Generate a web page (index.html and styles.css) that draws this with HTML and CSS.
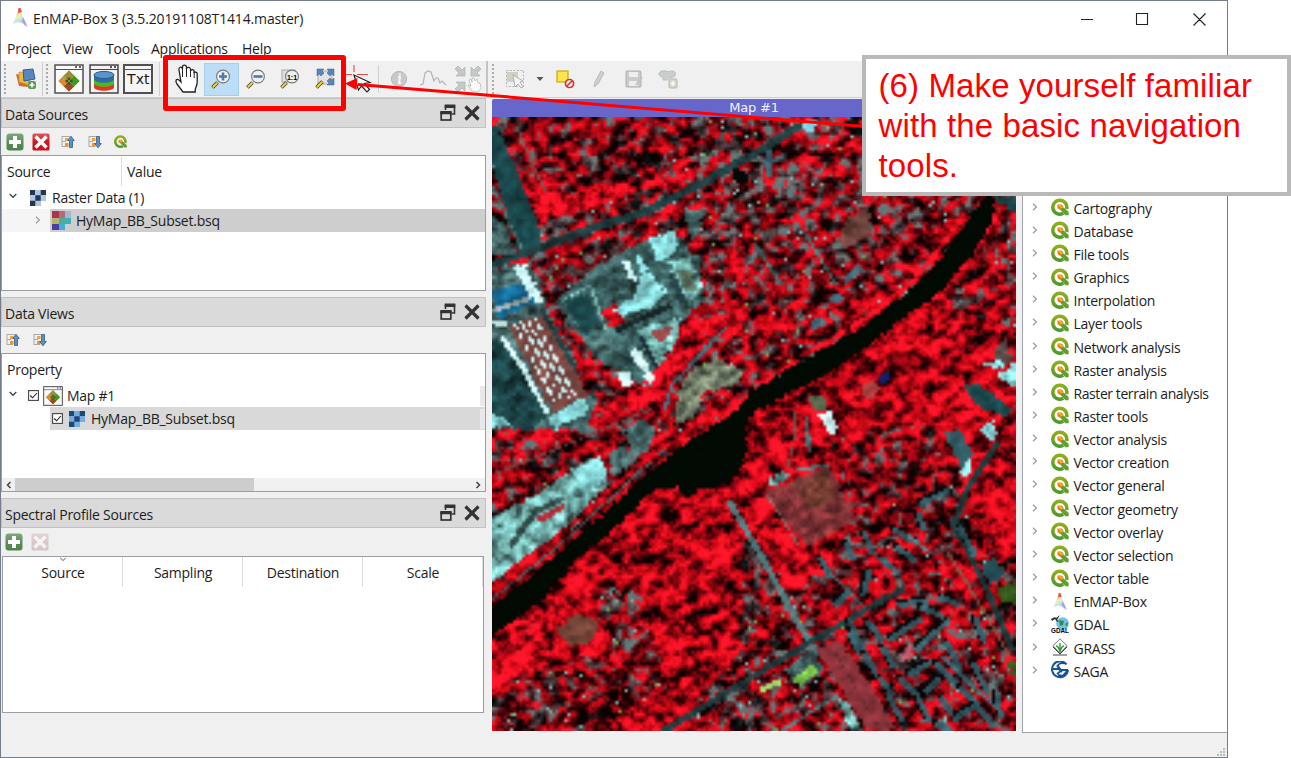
FILE: index.html
```html
<!DOCTYPE html>
<html lang="en">
<head>
<meta charset="utf-8">
<title>EnMAP-Box 3</title>
<link rel="stylesheet" href="styles.css">
</head>
<body>
<svg class="defs" width="0" height="0">
  <defs>
    <linearGradient id="rainbow" x1="0" y1="0" x2="0.45" y2="1">
      <stop offset="0" stop-color="#e8343c"/><stop offset=".3" stop-color="#f39b3c"/><stop offset=".5" stop-color="#e9ea80"/><stop offset=".7" stop-color="#8fd8d8"/><stop offset="1" stop-color="#8a7ae0"/>
    </linearGradient>
    <linearGradient id="qgreen" x1="0" y1="0" x2="0" y2="1"><stop offset="0" stop-color="#8fae1b"/><stop offset="1" stop-color="#4f9a2c"/></linearGradient>
    <linearGradient id="addg" x1="0" y1="0" x2="0" y2="1"><stop offset="0" stop-color="#7fa87c"/><stop offset=".5" stop-color="#5a8f58"/><stop offset="1" stop-color="#4a8448"/></linearGradient>
    <linearGradient id="delg" x1="0" y1="0" x2="0" y2="1"><stop offset="0" stop-color="#e2565c"/><stop offset=".5" stop-color="#cf1620"/><stop offset="1" stop-color="#d01018"/></linearGradient>
  </defs>
  <symbol id="enmap" viewBox="0 0 18 20"><path d="M8 1 2 17l5-2 4 1 5 4L11 7z" fill="url(#rainbow)" opacity=".6"/><path d="M7.500 1h2l1.500 4-4 1z" fill="#e23c35" opacity=".85"/><path d="M12 10l5 10-6-6z" fill="#8a70d8" opacity=".5"/></symbol>
  <symbol id="qgis" viewBox="0 0 18 18"><path d="M12.300 15.300A7 7 0 1 1 15.600 11" fill="none" stroke="url(#qgreen)" stroke-width="3.500"/><path d="M9.500 9.500h3.200l5 4.600v3.200h-3.300L9.500 12z" fill="#62a02c"/><path d="M6.500 6.500h4l2 2-3.400 3.400-2.600-2z" fill="#ee7913"/><path d="M7 6.800l2 0 2.500 2.200-1.200 1.200z" fill="#f6b93a"/></symbol>
  <symbol id="add" viewBox="0 0 18 18"><rect x=".5" y=".5" width="17" height="17" rx="3" fill="url(#addg)"/><path d="M7 3h4v4h4v4h-4v4H7v-4H3V7h4z" fill="#fff"/></symbol>
  <symbol id="del" viewBox="0 0 18 18"><rect x=".5" y=".5" width="17" height="17" rx="1.500" fill="url(#delg)"/><path d="M3.500 3.500l11 11m0-11l-11 11" stroke="#fff" stroke-width="3.500"/></symbol>
  <symbol id="collapse" viewBox="0 0 14 14"><path d="M1 1.500h8M1 1v11m0-.5h6M1 6.500h4" stroke="#aaa" fill="none"/><rect x="4" y="3" width="3.500" height="3" fill="#f3a53a"/><rect x="4" y="8" width="3.500" height="3.500" fill="#f39326"/><path d="M8.500 12.500V5.500H6.700L10 1.200l3.300 4.300h-1.800v7z" fill="#5d8fc4" stroke="#2d5f92" stroke-width=".8"/></symbol>
  <symbol id="expand" viewBox="0 0 14 14"><path d="M1 1.500h8M1 1v11m0-.5h6M1 6.500h4" stroke="#aaa" fill="none"/><rect x="4" y="3" width="3.500" height="3" fill="#f3a53a"/><rect x="4" y="8" width="3.500" height="3.500" fill="#f39326"/><path d="M8.500 1.500v7H6.700l3.300 4.300 3.300-4.300h-1.800v-7z" fill="#5d8fc4" stroke="#2d5f92" stroke-width=".8"/></symbol>
  <symbol id="float" viewBox="0 0 16 18"><path d="M5.500 6V2h9v8h-3" fill="none" stroke="#333" stroke-width="1.600"/><path d="M4.700 .6h10.600v3.400H4.700zM.3 7h11.400v3.200H.3z" fill="#333"/><rect x="1.200" y="9" width="9.600" height="7" fill="none" stroke="#333" stroke-width="1.700"/></symbol>
  <symbol id="close" viewBox="0 0 16 16"><path d="M1.500 1.500l13 13m0-13l-13 13" stroke="#333" stroke-width="3.200"/></symbol>
  <symbol id="right" viewBox="0 0 6 8"><path d="M1 .8l3.400 3.200L1 7.200" fill="none" stroke="#999" stroke-width="1.200"/></symbol>
  <symbol id="down" viewBox="0 0 8 6"><path d="M.7 1l3.300 3.300L7.300 1" fill="none" stroke="#444" stroke-width="1.300"/></symbol>
  <symbol id="glass" viewBox="0 0 22 22"><path d="M2.500 19.500l5-5" stroke="#333" stroke-width="3.600"/><path d="M2.800 19.200l4.500-4.500" stroke="#f3d22c" stroke-width="2.200"/><circle cx="13" cy="8.500" r="6.400" fill="#eef0f1" stroke="#777" stroke-width="1.100"/></symbol>
  <symbol id="mapwin" viewBox="0 0 30 30"><rect x="1" y="1" width="28" height="28" fill="#fafafa" stroke="#505050" stroke-width="1.500"/><path d="M1 5.500h28" stroke="#505050"/><path d="M21 3h2m2 0h2" stroke="#333" stroke-width="1.500"/><path d="M15 6.500L25.500 17 15 27.500 4.500 17z" fill="#6ba838"/><path d="M15 6.500l5.250 5.250L15 17l-5.250-5.250z" fill="#a08a3a"/><path d="M20.250 11.750L25.500 17l-5.250 5.250L15 17z" fill="#3f9b1f"/><path d="M9.750 11.750L15 17l-5.250 5.250L4.500 17z" fill="#e08a32"/><path d="M15 17l5.250 5.250L15 27.500l-5.250-5.250z" fill="#9c4a20"/><path d="M15 13l4 4-4 4-4-4z" fill="#44512a"/><path d="M9.750 11.750l10.500 10.500m0-10.500l-10.500 10.500" stroke="#7ab040" stroke-width=".8"/></symbol>
  <symbol id="raster" viewBox="0 0 16 16"><path fill="var(--lt)" d="M0 0h16v11h-5v5H0z"/><path fill="var(--dk)" d="M0 0h5v5H0zM10.700 0H16v5h-5.300zM5.300 5.300h5.400v5.400H5.300zM0 10.700h5.300V16H0z"/></symbol>
  <symbol id="check" viewBox="0 0 11 11"><rect x=".6" y=".6" width="9.800" height="9.800" fill="#fff" stroke="#444" stroke-width="1.100"/><path d="M2.300 5.500l2.300 2.300L8.900 3" fill="none" stroke="#222" stroke-width="1.100"/></symbol>
</svg>

<div class="window">
  <header class="titlebar">
    <svg class="app-icon"><use href="#enmap"/></svg>
    <span class="app-title">EnMAP-Box 3 (3.5.20191108T1414.master)</span>
    <svg class="win-buttons" viewBox="0 0 128 16"><path d="M1 8.500h12M56.500 2.500h11v11h-11zM113.500 2.500l12 12m0-12l-12 12" fill="none" stroke="#222" stroke-width="1.100"/></svg>
  </header>
  <nav class="menubar"><span class="m-project">Project</span><span class="m-view">View</span><span class="m-tools">Tools</span><span class="m-apps">Applications</span><span>Help</span></nav>

  <div class="toolbar">
    <i class="handle"></i>
    <span class="tool first"><svg width="22" height="22" viewBox="0 0 22 22"><path d="M1 6l10 2 2 11-9-1z" fill="#d26a34"/><path d="M4 4l11 1-1 12-10-3z" fill="#edbd3a" stroke="#c98a22" stroke-width=".6"/><path d="M8 2l10-1 2 10-11 2z" fill="#5886bd" stroke="#315f94"/><rect x="13" y="13" width="8" height="8" rx="2" fill="#5d995b"/><path d="M17 14.500v5m-2.500-2.500h5" stroke="#fff" stroke-width="1.600"/></svg></span>
    <i class="sep"></i><i class="handle"></i>
    <span class="tool"><svg width="30" height="30"><use href="#mapwin"/></svg></span>
    <span class="tool"><svg width="30" height="30" viewBox="0 0 30 30"><rect x="1" y="1" width="28" height="28" fill="#f3f3f3" stroke="#444" stroke-width="1.500"/><path d="M1 5.500h28" stroke="#444"/><path d="M21 3h2m2 0h2" stroke="#222" stroke-width="1.500"/><path d="M5 19v4c0 5 20 5 20 0v-4z" fill="#e8321f"/><path d="M5 15v4c0 5 20 5 20 0v-4z" fill="#46bd1e"/><path d="M5 10v5c0 5 20 5 20 0v-5z" fill="#2e6ca8"/><ellipse cx="15" cy="11" rx="10" ry="3.600" fill="#5b93c9" stroke="#275b8e"/></svg></span>
    <span class="tool"><span class="txt">Txt</span></span>
    <i class="sep after"></i><i class="handle"></i>
    <span class="tool"><svg width="26" height="30" viewBox="0 0 26 30"><path d="M9 28L3 20C1 17 2 14 5 16l2 2L5 6C4.500 3 7.500 2 8.500 5V3c0-2.500 3.500-2.500 4 0v2c0-2.500 3.800-2 4 0v2c.5-2 3.500-2 3.700.5V9c.5-1.500 3-1 3 1v8c0 4-2 6-2 8v2z" fill="#fff" stroke="#222" stroke-width="1.300"/><path d="M8.500 5v8m4-8v8m4-7v7m3.700-5v6" stroke="#222" fill="none"/></svg></span>
    <span class="tool active"><svg width="22" height="22" viewBox="0 0 22 22"><use href="#glass"/><path d="M13 4.500v8m-4-4h8" stroke="#4c7bb0" stroke-width="2.600"/></svg></span>
    <span class="tool"><svg width="22" height="22" viewBox="0 0 22 22"><use href="#glass"/><path d="M8.500 8.500h9" stroke="#4c7bb0" stroke-width="2.600"/></svg></span>
    <span class="tool"><svg width="22" height="22" viewBox="0 0 22 22"><rect x="3" y="2" width="13" height="12" fill="#ddd" stroke="#aaa"/><use href="#glass"/><text x="13" y="11.500" class="one">1:1</text></svg></span>
    <span class="tool"><svg width="22" height="22" viewBox="0 0 22 22"><rect x="4" y="3" width="14" height="13" fill="#e2e2e2" stroke="#aaa"/><path d="M2.500 19.500l6-6" stroke="#333" stroke-width="3.600"/><path d="M2.800 19.200l5.500-5.500" stroke="#f3d22c" stroke-width="2.200"/><path d="M3 1h7L8 3l2 2-3 3-2-2-2 2zM13 1h7v7l-2-2-2 2-3-3 2-2zM20 10v7h-7l2-2-2-2 3-3 2 2z" fill="#5986b8" stroke="#36638f" stroke-width=".5"/></svg></span>
    <span class="tool"><svg width="30" height="32" viewBox="0 0 30 32"><path d="M10 2v7M1 11.500h7m5 0h11" stroke="#ee4444" stroke-width="1.100"/><path d="M10 12l4.500 15 3-4 5.500 6 2.500-2.500-5-6 5.500-1z" fill="#fff" stroke="#222" stroke-width="1.200"/></svg></span>
    <i class="sep gap"></i>
    <span class="tool"><svg width="18" height="18" viewBox="0 0 18 18"><circle cx="9" cy="9" r="7.600" fill="#c7cacb" stroke="#b5b8b9"/><path d="M9.800 3.500v2M8 7h2l-1 6h2" stroke="#f4f4f4" stroke-width="2" fill="none"/></svg></span>
    <span class="tool"><svg width="28" height="20" viewBox="0 0 28 20"><path d="M1 16l3-1 2-11 3-2 3 1 3 9 2-3 2 0 2 5 2-2 4 4" fill="none" stroke="#b3b3b3" stroke-width="1.200"/></svg></span>
    <span class="tool"><svg width="28" height="28" viewBox="0 0 28 28" fill="#c5c8c8" stroke="#afb2b2" stroke-width=".7"><path d="M4 1l4 4 3-3v9H2l3-3-4-4zM24 1l-4 4-3-3v9h9l-3-3 4-4zM4 27l4-4 3 3v-9H2l3 3-4 4z"/><path d="M18 26l-4-6 3 1-2-6 2-1 1 3v-4h2l1 3 2-2 1 4 2 0 1 5-3 4z" fill="#fafafa"/></svg></span>
    <i class="edge"></i><i class="handle"></i>
    <span class="tool"><svg width="20" height="20" viewBox="0 0 20 20"><rect x="1.500" y="1.500" width="17" height="16" fill="none" stroke="#b5b5b5" stroke-dasharray="2 1.500"/><path d="M2 3h11v10H2z" fill="#d0d0c2"/><path d="M8 6l2 12 3-3 3 4 2-1-3-5 3-1z" fill="#f4f4f4" stroke="#b0b0b0"/></svg></span>
    <span class="caret"></span>
    <span class="tool"><svg width="20" height="20" viewBox="0 0 20 20"><rect x="2" y="2" width="11" height="11" fill="#fbe64c" stroke="#c9a90a" stroke-width="1.200"/><circle cx="14.500" cy="14.500" r="4" fill="#fff" stroke="#d8322c" stroke-width="1.700"/><path d="M12 17l5-5" stroke="#d8322c" stroke-width="1.600"/></svg></span>
    <span class="tool"><svg width="18" height="20" viewBox="0 0 18 20"><path d="M4 18l1-5 6-11 3 2-6 11z" fill="#d0d0ca" stroke="#bbb"/></svg></span>
    <span class="tool"><svg width="20" height="20" viewBox="0 0 20 20"><rect x="2" y="2" width="15" height="16" rx="1" fill="#cacaca" stroke="#b0b0b0"/><path d="M5 3h9v5H5zM5 12h9v5H5z" fill="#eee"/><path d="M12 16l6-8" stroke="#cbbdba" stroke-width="2"/></svg></span>
    <span class="tool"><svg width="22" height="20" viewBox="0 0 22 20"><path d="M3 3c5-3 7 1 11-1 5-1 6 5 2 6-3 1-4 0-6 3H6c2-4-7-3-3-8z" fill="#c9cdcc" stroke="#babdbc"/><rect x="12" y="10" width="8" height="9" rx="1" fill="#d7d7c7" stroke="#b5b5b5"/><path d="M16 12v5m-2.500-2.500h5" stroke="#f8f8f8" stroke-width="1.500"/></svg></span>
  </div>

  <main class="workspace">
    <div class="docks">
      <section class="dock sources">
        <div class="dock-title"><span>Data Sources</span><svg class="float"><use href="#float"/></svg><svg class="close"><use href="#close"/></svg></div>
        <div class="dock-tools"><svg class="i18"><use href="#add"/></svg><svg class="i18"><use href="#del"/></svg><svg class="i14"><use href="#collapse"/></svg><svg class="i14"><use href="#expand"/></svg><svg class="i12"><use href="#qgis"/></svg></div>
        <div class="tree">
          <div class="tree-head"><span class="col">Source</span><span class="col2">Value</span></div>
          <div class="row r1"><svg class="down"><use href="#down"/></svg><svg class="ras darkras"><use href="#raster"/></svg><span>Raster Data (1)</span></div>
          <div class="row r2"><span class="indent"><svg class="right"><use href="#right"/></svg></span><span class="selected"><svg class="bands" viewBox="0 0 19 19"><path fill="#aa3158" d="M0 0h7v7H0z"/><path fill="#b36c72" d="M7 0h6v7H7z"/><path fill="#9fb9d4" d="M13 0h6v7h-6z"/><path fill="#b7b269" d="M0 7h7v6H0z"/><path fill="#52aa9a" d="M7 7h6v6H7z"/><path fill="#3fb0b8" d="M13 7h6v6h-6z"/><path fill="#4a3da4" d="M0 13h7v6H0z"/><path fill="#42aed1" d="M7 13h6v6H7z"/></svg><span>HyMap_BB_Subset.bsq</span></span></div>
        </div>
      </section>
      <section class="dock views">
        <div class="dock-title"><span>Data Views</span><svg class="float"><use href="#float"/></svg><svg class="close"><use href="#close"/></svg></div>
        <div class="dock-tools slim"><svg class="i14"><use href="#collapse"/></svg><svg class="i14"><use href="#expand"/></svg></div>
        <div class="tree">
          <div class="tree-head"><span>Property</span></div>
          <div class="row v1"><svg class="down"><use href="#down"/></svg><svg class="chk"><use href="#check"/></svg><svg class="mapicon"><use href="#mapwin"/></svg><span>Map #1</span><i class="stub"></i></div>
          <div class="row v2"><span class="selected"><svg class="chk"><use href="#check"/></svg><svg class="ras"><use href="#raster"/></svg><span>HyMap_BB_Subset.bsq</span><i class="stub"></i></span></div>
          <div class="hscroll"><svg viewBox="0 0 6 8"><path d="M4.500 1L1.500 4l3 3" fill="none" stroke="#444" stroke-width="1.500"/></svg><i class="thumb"></i><svg viewBox="0 0 6 8"><path d="M1.500 1l3 3-3 3" fill="none" stroke="#444" stroke-width="1.500"/></svg></div>
        </div>
      </section>
      <section class="dock spectral">
        <div class="dock-title"><span>Spectral Profile Sources</span><svg class="float"><use href="#float"/></svg><svg class="close"><use href="#close"/></svg></div>
        <div class="dock-tools"><svg class="i18"><use href="#add"/></svg><svg class="i18 off"><use href="#del"/></svg></div>
        <div class="table"><span>Source<svg class="sort"><use href="#down"/></svg></span><span>Sampling</span><span>Destination</span><span>Scale</span></div>
      </section>
    </div>

    <section class="mapdock">
      <div class="map-title">Map #1</div>
      <canvas id="map" width="174" height="205"></canvas>
    </section>

    <aside class="toolbox">
      <div class="alg"><svg class="right"><use href="#right"/></svg><svg class="q"><use href="#qgis"/></svg>Cartography</div>
      <div class="alg"><svg class="right"><use href="#right"/></svg><svg class="q"><use href="#qgis"/></svg>Database</div>
      <div class="alg"><svg class="right"><use href="#right"/></svg><svg class="q"><use href="#qgis"/></svg>File tools</div>
      <div class="alg"><svg class="right"><use href="#right"/></svg><svg class="q"><use href="#qgis"/></svg>Graphics</div>
      <div class="alg"><svg class="right"><use href="#right"/></svg><svg class="q"><use href="#qgis"/></svg>Interpolation</div>
      <div class="alg"><svg class="right"><use href="#right"/></svg><svg class="q"><use href="#qgis"/></svg>Layer tools</div>
      <div class="alg"><svg class="right"><use href="#right"/></svg><svg class="q"><use href="#qgis"/></svg>Network analysis</div>
      <div class="alg"><svg class="right"><use href="#right"/></svg><svg class="q"><use href="#qgis"/></svg>Raster analysis</div>
      <div class="alg tight"><svg class="right"><use href="#right"/></svg><svg class="q"><use href="#qgis"/></svg>Raster terrain analysis</div>
      <div class="alg"><svg class="right"><use href="#right"/></svg><svg class="q"><use href="#qgis"/></svg>Raster tools</div>
      <div class="alg"><svg class="right"><use href="#right"/></svg><svg class="q"><use href="#qgis"/></svg>Vector analysis</div>
      <div class="alg"><svg class="right"><use href="#right"/></svg><svg class="q"><use href="#qgis"/></svg>Vector creation</div>
      <div class="alg"><svg class="right"><use href="#right"/></svg><svg class="q"><use href="#qgis"/></svg>Vector general</div>
      <div class="alg"><svg class="right"><use href="#right"/></svg><svg class="q"><use href="#qgis"/></svg>Vector geometry</div>
      <div class="alg"><svg class="right"><use href="#right"/></svg><svg class="q"><use href="#qgis"/></svg>Vector overlay</div>
      <div class="alg"><svg class="right"><use href="#right"/></svg><svg class="q"><use href="#qgis"/></svg>Vector selection</div>
      <div class="alg"><svg class="right"><use href="#right"/></svg><svg class="q"><use href="#qgis"/></svg>Vector table</div>
      <div class="alg"><svg class="right"><use href="#right"/></svg><svg class="q"><use href="#enmap"/></svg>EnMAP-Box</div>
      <div class="alg"><svg class="right"><use href="#right"/></svg><svg class="q" viewBox="0 0 18 18"><circle cx="11.500" cy="8.500" r="6.300" fill="#6cc5e6"/><path d="M8 5l5 1-1 4-3 1zM14 9l3-2-1 5z" fill="#3b8a4a"/><path d="M0 4l4-2 1 1 4-3-3 5 2 1-2 1-2-3-3 2z" fill="#333"/><text x="9" y="18" class="gdal" textLength="18" lengthAdjust="spacingAndGlyphs">GDAL</text></svg>GDAL</div>
      <div class="alg"><svg class="right"><use href="#right"/></svg><svg class="q" viewBox="0 0 18 18"><path d="M9 .8l7 7-7 7.500-7-7.500z" fill="#f5f5f5" stroke="#777"/><path d="M2 9l7 7 7-7M2 17h14" stroke="#444" fill="none"/><path d="M9 14V5M9 14c-1-4-2-6-4-6m4 6c1-4 2-6 4-6" stroke="#2e9e35" stroke-width="1.300" fill="none"/></svg>GRASS</div>
      <div class="alg"><svg class="right"><use href="#right"/></svg><svg class="q" viewBox="0 0 18 18"><path d="M15.500 3.500A8 8 0 1 0 17 9M15.500 3C12 1 8 2 6.500 5L10 9h7M1 8h7l3 3M6 13l5-4M7 14l5 1 5-6" fill="none" stroke="#17539a" stroke-width="2"/></svg>SAGA</div>
    </aside>
  </main>
  <svg class="grip" viewBox="0 0 8 8"><path d="M6 0h2v2H6zM3 3h2v2H3zM6 3h2v2H6zM0 6h2v2H0zM3 6h2v2H3zM6 6h2v2H6z" fill="#bbb"/></svg>
</div>

<div class="highlight"></div>
<svg class="pointer" width="1291" height="758"><path d="M864 126.500L358 84.500" stroke="#f00" stroke-width="3"/><path d="M345 83.500l12.500-5.500-1 12z" fill="#f00"/></svg>
<div class="callout">(6) Make yourself familiar<br>with the basic navigation<br>tools.</div>
<script src="map.js"></script>
</body>
</html>
```
FILE: styles.css
```css
* { box-sizing: border-box; }
body { margin: 0; width: 1291px; height: 758px; overflow: hidden; position: relative; background: #fff; font: 14px/18px "Open Sans", "Noto Sans", sans-serif; letter-spacing: -0.25px; color: #1c1c1c; }
svg { display: block; flex: none; }
.defs { position: absolute; }
.window { position: relative; width: 1228px; height: 758px; border: 1px solid #757c8a; background: #f0f0f0; display: flex; flex-direction: column; }
.titlebar { height: 36px; background: #fff; display: flex; align-items: center; padding-left: 10px; }
.app-icon { width: 18px; height: 20px; margin-top: -4px; }
.app-title { margin-left: 4px; flex: 1; letter-spacing: -0.15px; }
.win-buttons { width: 128px; height: 16px; margin-right: 19px; margin-top: -1px; }
.menubar { height: 24px; background: #fff; display: flex; align-items: center; padding: 0 0 1px 6px; }
.m-project { width: 56px; } .m-view { width: 43px; } .m-tools { width: 45px; } .m-apps { width: 91px; }
.toolbar { height: 37px; display: flex; align-items: center; border-bottom: 1px solid #d0d0d0; }
.toolbar i { flex: none; }
.handle { width: 9px; height: 32px; background: radial-gradient(circle, #aaa 0.8px, transparent 1px) 2px 0 / 4px 4px repeat-y; }
.sep { width: 1px; height: 34px; background: #cfcfcf; }
.sep.after { margin: 0 1px 0 3px; }
.sep.gap { margin: 0 3px 0 1px; height: 28px; }
.edge { width: 2px; height: 36px; background: #c4c4c4; margin: 0 1px 0 1px; }
.tool { width: 34.5px; height: 33px; flex: none; display: flex; align-items: center; justify-content: center; }
.tool.first { width: 32px; }
.tool.active { background: #bddcf5; border: 1px solid #a4cff3; }
.txt { width: 30px; height: 30px; border: 2px solid #505050; font: 14px/27px "DejaVu Sans", sans-serif; letter-spacing: 0; text-align: center; background: linear-gradient(#f5f5f5 3px, #555 3px, #555 4px, #f5f5f5 4px); }
.one { font: bold 7px "Liberation Sans", sans-serif; text-anchor: middle; letter-spacing: 0; }
.caret { width: 15px; height: 4px; background: #555; clip-path: polygon(4px 0, 11px 0, 7.500px 4px); }
.workspace { flex: none; height: 636px; display: flex; }
.docks { width: 485px; display: flex; flex-direction: column; }
.dock { display: flex; flex-direction: column; }
.sources { height: 199px; padding-bottom: 6px; }
.views { height: 201px; padding-bottom: 6px; }
.spectral { height: 216px; padding-bottom: 1px; }
.dock-title { height: 30px; background: #dadada; border: 1px solid #c2c2c2; display: flex; align-items: center; padding: 3px 5px 0 3px; flex: none; }
.dock-title > span { flex: 1; }
.float { width: 16px; height: 18px; margin: -4px 8px 0 0; }
.close { width: 16px; height: 16px; margin-top: -4px; }
.dock-tools { height: 27px; flex: none; display: flex; align-items: center; padding: 0 0 0 5px; gap: 8px; }
.i18 { width: 18px; height: 18px; }
.i14 { width: 14px; height: 14px; margin-left: 3px; }
.i14 + .i14 { margin-left: 5px; }
.i12 { width: 13px; height: 13px; margin-left: 4px; }
.slim { padding-left: 2px; height: 26px; }
.off { opacity: .2; filter: saturate(.5); }
.tree { flex: 1; background: #fff; border: 1px solid #9a9da3; display: flex; flex-direction: column; position: relative; }
.tree-head { height: 30px; display: flex; align-items: center; padding: 1px 0 0 5px; flex: none; }
.col { width: 115px; height: 29px; line-height: 29px; border-right: 1px solid #ddd; }
.col2 { padding-left: 5px; }
.row { display: flex; align-items: center; height: 23px; }
.down { width: 8px; height: 6px; margin: -3px 0 0 7px; }
.right { width: 6px; height: 8px; }
.ras { width: 16px; height: 16px; --lt: #75abe1; --dk: #1d4775; }
.darkras { margin: 0 6px 0 13px; --lt: #afc7e3; --dk: #26374c; }
.indent { width: 48px; height: 23px; background: #f5f5f5; padding: 7px 0 0 33px; }
.selected { flex: 1; height: 23px; background: #cecece; display: flex; align-items: center; }
.bands { width: 19px; height: 19px; margin: 0 5px 0 2px; }
.v2 { padding-left: 48px; }
.v2 .selected { background: #d9d9d9; padding-left: 2px; }
.chk { width: 11px; height: 11px; }
.v1 .chk { margin-left: 11px; }
.mapicon { width: 20px; height: 20px; margin: 0 4px 0 4px; }
.v2 .ras { margin: 0 6px 0 6px; }
.stub { width: 5px; height: 20px; background: #e9e9e9; margin-left: auto; }
.hscroll { height: 13px; margin-top: auto; background: #f0f0f0; display: flex; align-items: center; padding: 0 4px; }
.hscroll svg { width: 6px; height: 8px; }
.hscroll svg:last-child { margin-left: auto; }
.thumb { width: 239px; height: 13px; background: #cdcdcd; margin-left: 3px; }
.spectral .dock-tools { padding-left: 4px; height: 28px; }
.table { margin: 0 2px 0 1px; flex: 1; background: #fff; border: 1px solid #9a9da3; display: flex; }
.table span { position: relative; width: 120px; height: 30px; line-height: 31px; padding-left: 1px; text-align: center; border-right: 1px solid #ddd; }
.sort { position: absolute; left: 56px; top: 0; width: 8px; height: 5px; opacity: .6; }
.mapdock { margin: 1px 0 0 6px; width: 524px; }
.map-title { height: 18px; background: #6767cb; color: #f1f1fa; text-align: center; font: 13px/18px "DejaVu Sans", sans-serif; letter-spacing: -.2px; border-radius: 2px 2px 0 0; }
#map { display: block; width: 524px; height: 614px; }
.toolbox { margin-left: 6px; width: 205px; height: 635px; background: #fff; border: 1px solid #a0a3a8; border-right: 0; padding-top: 98px; }
.alg { height: 23.170px; display: flex; align-items: center; padding-left: 9px; }
.tight { letter-spacing: -.42px; }
.alg .right { margin-top: -4px; }
.q { width: 18px; height: 18px; margin: -3px 4.500px 0 13px; }
.gdal { font: bold 7px "Liberation Sans", sans-serif; text-anchor: middle; letter-spacing: 0; }
.grip { position: absolute; width: 8px; height: 8px; right: 2px; bottom: 1px; }
.highlight { position: absolute; left: 163px; top: 55px; width: 183px; height: 56px; border: 5px solid #f00; border-radius: 3px; }
.pointer { position: absolute; left: 0; top: 0; }
.callout { position: absolute; left: 862px; top: 55px; width: 429px; height: 141px; background: #fff; border: 4px solid #b9b9b9; color: #f00; font: 33px/40px "Liberation Sans", Arial, sans-serif; letter-spacing: .12px; padding: 7px 0 0 12.500px; white-space: nowrap; }
```
FILE: map.js
```js
// False-colour scene: each cell takes the last land-cover shape that contains it.
const OX = 492, OY = 117, CELL = 3;
const canvas = document.getElementById('map');
const ctx = canvas.getContext('2d');
const W = canvas.width, H = canvas.height;

function hash(x, y, s) {
  let h = Math.imul(x, 374761393) ^ Math.imul(y, 668265263) ^ Math.imul(s, 1274126177);
  h = Math.imul(h ^ (h >>> 13), 1103515245);
  return ((h ^ (h >>> 16)) >>> 0) / 4294967296;
}
function smooth(x, y, s) {
  const i = Math.floor(x), j = Math.floor(y), u = x - i, v = y - j;
  const a = hash(i, j, s), b = hash(i + 1, j, s), c = hash(i, j + 1, s), d = hash(i + 1, j + 1, s);
  return a + (b - a) * u + (c - a) * v + (a - b - c + d) * u * v;
}
function ramp(cols, t) {
  t = Math.max(0, Math.min(0.9999, t)) * (cols.length - 1);
  const i = Math.floor(t), f = t - i;
  return cols[i].map((c, k) => c + (cols[i + 1][k] - c) * f);
}
const RED = [[8, 2, 2], [50, 0, 4], [115, 6, 14], [175, 8, 20], [225, 10, 25], [255, 22, 42]];
const GREY = [[8, 16, 16], [40, 40, 42], [85, 48, 54], [80, 84, 84], [125, 120, 118], [80, 125, 128]];
// g: share of built-up cells, b: brightness shift, s: share of bright specks
const veg = (g, b, s) => ({ g, b, s });
const flat = (r, g, bl, n) => ({ c: [r, g, bl], n });
const FOREST = veg(.04, .06, 0), BRIGHT = veg(.06, .15, 0), TOWN = veg(.32, -.06, .015), MIX = veg(.26, -.05, .008);
const WATER = flat(1, 10, 2, .2), TEAL = flat(27, 72, 76, .35), ROAD = flat(32, 61, 63, .5), STEEL = flat(62, 103, 116, .4);
const CYAN = flat(140, 222, 224, .4), PALE = flat(112, 172, 168, .8), WHITE = flat(210, 250, 250, .2), BROWN = flat(120, 70, 65, .35), GREYT = flat(70, 103, 103, .7);
const shapes = [];
const P = (m, ...pts) => shapes.push({ m, pts });
const L = (m, w, ...pts) => shapes.push({ m, w, pts });

P(TOWN, 492,117, 1016,117, 1016,196, 740,400, 492,590);
P(veg(.25, -.12, 0), 505,117, 690,117, 660,180, 570,197, 540,215);
P(BRIGHT, 500,140, 522,170, 570,195, 650,180, 690,172, 600,205, 535,222);
P(MIX, 492,460, 690,330, 1000,200, 985,230, 900,300, 740,400, 492,590);
P(BRIGHT, 492,440, 560,437, 650,405, 680,372, 730,315, 690,320, 650,385, 590,405, 575,380, 560,350);
P(FOREST, 492,640, 700,480, 765,405, 895,318, 1016,196, 1016,731, 492,731);
P(MIX, 950,290, 1016,200, 1016,330, 980,318, 950,315);
P(BRIGHT, 492,660, 560,600, 590,620, 520,670, 492,700);
P(veg(.3, -.12, 0), 830,440, 930,423, 945,475, 890,505, 850,510);
P(veg(.28, -.05, .01), 852,520, 900,490, 950,460, 1016,580, 1016,731, 830,731, 760,650);
P(TOWN, 740,520, 830,640, 860,731, 670,731, 740,650);
P(veg(.26, -.15, .02), 492,690, 560,660, 650,655, 665,690, 590,731, 492,731);
P(TOWN, 595,590, 640,590, 660,660, 650,685, 615,660);
P(veg(0, .4, 0), 492,668, 545,632, 520,675, 492,690);

// roads and canal in the north-west
P(TEAL, 492,121, 500,132, 534,212, 543,252, 520,254, 492,165);
L(GREYT, 3, 492,185, 523,252);
L(ROAD, 8, 492,265, 540,248, 595,227, 640,214, 700,184, 760,150, 800,124);
L(flat(125,72,72,.3), 3, 516,126, 535,170, 545,190);
P(flat(3,8,8,.2), 730,168, 744,172, 750,184, 733,181);
L(STEEL, 4, 768,150, 768,175);
L(STEEL, 4, 764,162, 780,158);
P(flat(130,210,225,.2), 800,120, 815,122, 812,132, 801,130);
P(GREYT, 492,215, 505,225, 517,255, 492,256);

// factory halls
P(GREYT, 492,270, 530,260, 552,320, 597,402, 585,430, 492,430);
P(flat(22,105,150,.35), 492,292, 522,283, 535,302, 497,320);
L(flat(155,170,170,.4), 5, 495,310, 530,298);
P(WHITE, 513,268, 524,262, 543,300, 536,305);
P(BROWN, 508,326, 545,315, 589,395, 552,413);
for (let r = 0; r < 19; r++)
  for (let c = 0; c < 4; c++)
    L(WHITE, 2.5, 514 + c * 7 + r * 2.1, 325 - c * 1.5 + r * 4.1, 516 + c * 7 + r * 2.1, 326 - c * 1.5 + r * 4.1);
P(flat(28,65,68,.7), 492,340, 510,345, 548,415, 530,432, 492,425);
L(WHITE, 5, 502,338, 523,368, 546,412);
L(WHITE, 5, 492,322, 506,325);
P(CYAN, 548,418, 582,398, 590,410, 555,431);
P(CYAN, 492,412, 511,424, 492,430);
L(ROAD, 5, 543,312, 567,355, 594,398);

// quarry and depot
P(flat(60,95,95,.8), 555,300, 600,265, 632,248, 670,232, 698,260, 703,300, 680,325, 660,365, 640,385, 612,372, 580,342);
P(MIX, 562,322, 582,335, 600,375, 585,395);
P(BRIGHT, 600,312, 615,304, 625,322, 609,328);
P(TEAL, 565,300, 586,296, 599,322, 583,335);
L(PALE, 2, 558,303, 590,285, 605,330);
P(CYAN, 637,255, 650,275, 666,292, 650,308, 620,317, 612,310, 633,298, 640,277);
P(CYAN, 648,238, 675,231, 677,250, 658,263);
P(WHITE, 622,262, 628,259, 636,280, 628,281);
P(PALE, 668,262, 688,256, 702,286, 688,306);
P(flat(105,130,110,.4), 676,270, 690,272, 696,290, 682,288);
P(flat(40,68,75,.3), 668,278, 677,280, 688,306, 678,304);
L(flat(25,38,40,.5), 6, 618,330, 655,312, 668,307);
P(PALE, 635,330, 680,318, 676,340, 656,370, 642,348);
P(flat(150,70,72,.3), 650,332, 675,326, 660,345);
L(flat(25,45,52,.3), 4, 640,338, 656,368);
P(WHITE, 628,352, 638,349, 655,381, 648,383);
P(WHITE, 617,373, 629,371, 633,387, 624,389);
P(MIX, 605,365, 616,368, 622,390, 600,395);
P(GREYT, 582,338, 610,332, 618,350, 600,358);
P(flat(108,120,100,.7), 676,395, 690,370, 715,358, 741,370, 735,385, 705,392, 690,420, 675,425);
L(STEEL, 3, 664,410, 672,384, 725,328);
P(GREYT, 684,208, 703,212, 696,240, 687,235);

// northern town buildings
L(GREYT, 4, 755,245, 780,285);
L(GREYT, 3, 805,235, 835,285);
P(flat(105,65,58,.5), 848,215, 870,210, 868,235, 840,250, 838,235);
L(STEEL, 7, 845,281, 857,268);
P(STEEL, 827,296, 837,292, 843,303, 833,306);
P(STEEL, 808,322, 820,316, 823,326, 813,330);

// open ground south-west
P(PALE, 492,518, 545,490, 570,470, 600,455, 608,485, 590,500, 575,530, 540,545, 515,565, 492,585);
P(CYAN, 572,472, 600,455, 607,475, 586,498);
L(flat(55,85,82,.5), 6, 512,545, 535,512, 560,500);
L(flat(170,45,55,.4), 6, 540,520, 562,508);
P(GREYT, 607,455, 622,445, 632,465, 612,478);
L(GREYT, 2, 492,600, 560,545, 650,462);
L(BRIGHT, 5, 492,590, 560,535, 650,455, 740,400);
L(veg(0, .35, 0), 5, 740,402, 800,357, 865,318, 907,286, 945,240, 957,222);
L(flat(110,70,70,.3), 2, 492,475, 560,448, 650,410);
P(GREYT, 622,430, 640,418, 655,430, 650,445, 636,460);

// river and lake
P(WATER, 492,607, 560,553, 607,510, 640,480, 673,453, 737,410, 750,392, 800,362, 863,325, 907,292, 947,248, 970,215, 985,196, 994,196, 990,222, 970,255, 943,287, 900,320, 866,346, 825,374, 785,395, 754,411, 743,425, 747,450, 738,472, 723,485, 700,490, 687,498, 676,487, 655,489, 620,523, 573,563, 540,603, 492,637);
P(TEAL, 990,196, 1016,196, 1016,215);

// south bank: depot and brown fields
P(flat(130,52,55,.5), 762,493, 828,465, 855,520, 805,547);
P(flat(120,62,52,.5), 790,485, 828,470, 835,500, 812,512);
L(flat(130,95,90,.3), 2, 764,492, 796,544);
L(GREYT, 3, 795,470, 828,466);
L(flat(120,75,70,.3), 2, 795,400, 793,440, 786,470);
P(flat(85,95,70,.3), 808,398, 822,394, 826,408, 812,412);
P(WHITE, 817,414, 828,411, 837,426, 829,438);
P(PALE, 768,480, 782,472, 790,476, 772,488);
P(flat(20,35,110,.3), 876,375, 888,372, 890,381, 880,384);
P(flat(175,65,65,.2), 860,386, 872,382, 880,388, 866,402);
L(GREYT, 4, 805,418, 808,452);
P(flat(115,68,55,.3), 557,630, 575,614, 598,620, 592,643, 570,647);
L(PALE, 2, 608,600, 612,588, 620,595, 615,604);

// industrial strip on the east edge
P(TEAL, 960,385, 975,384, 1012,410, 1000,416, 975,406);
P(flat(90,75,72,.4), 990,350, 1004,340, 1010,360, 998,370);
P(CYAN, 995,375, 1014,362, 1016,390);
P(CYAN, 983,365, 998,358, 1003,366, 990,370);
P(flat(48,88,95,.3), 942,433, 958,428, 972,455, 960,470);
P(CYAN, 977,430, 990,422, 997,435, 988,443);
P(CYAN, 957,470, 969,459, 972,469, 962,477);
L(ROAD, 6, 995,445, 965,490, 952,525, 985,590, 1010,650);

// roads and estates in the south-east
L(flat(82,123,125,.25), 6, 729,503, 765,565, 800,630, 815,650);
L(ROAD, 6, 664,731, 730,691, 805,645, 900,590);
L(GREYT, 3, 733,699, 750,731);
P(flat(142,52,60,.25), 815,650, 838,640, 865,680, 895,731, 866,731);
L(flat(95,50,50,.2), 1, 833,652, 878,731);
P(GREYT, 785,670, 812,650, 824,670, 800,690);
P(flat(130,205,80,.3), 792,680, 812,665, 817,673, 798,688);
L(flat(170,215,110,.3), 6, 762,690, 777,683);
P(PALE, 836,697, 845,700, 860,731, 848,731);
L(GREYT, 3, 780,731, 836,697);
const blocks = [[848,622,868,662],[850,636,857,653],[867,623,880,641],[882,650,892,667],[864,656,874,674],[889,640,917,621],[916,650,946,622],[920,504,945,492],[893,530,915,543],[896,548,912,560],[862,595,868,572],[880,560,895,572],[898,605,925,603],[920,608,940,617],[946,645,958,670],[935,665,960,690],[972,665,985,692],[974,620,982,641],[940,700,955,720],[960,690,975,705],[880,680,890,695],[888,700,900,720],[900,680,915,695],[917,700,927,720],[937,680,925,692],[995,695,998,715],[958,529,973,555],[820,560,828,575],[845,545,851,558],[863,535,870,551],[835,605,845,595],[975,706,990,725],[955,718,975,706],[935,725,948,731],[940,598,955,605],[917,516,922,528],[908,675,928,664]];
blocks.forEach(([a, b, c, d]) => { L(flat(14, 8, 10, .5), 5, a - 3, b - 3, c - 3, d - 3); L(flat(52, 91, 101, .4), 6, a, b, c, d); });
L(GREYT, 3, 870,550, 885,540, 905,535, 930,555);
L(GREYT, 2, 830,575, 860,605);
L(flat(135,75,65,.3), 3, 945,552, 975,600, 1008,658);
L(STEEL, 3, 940,657, 1000,715);
P(flat(38,80,88,.2), 978,567, 994,557, 1003,575, 988,584);
P(flat(52,92,25,.3), 993,592, 1016,580, 1016,605, 1000,603);
P(flat(52,82,25,.3), 1004,665, 1016,660, 1016,683);
P(flat(180,90,105,.4), 898,655, 908,646, 912,658, 902,664);

function inside(p, x, y) {
  let r = false;
  for (let i = 0, j = p.length - 2; i < p.length; j = i, i += 2)
    if ((p[i + 1] > y) !== (p[j + 1] > y) && x < (p[j] - p[i]) * (y - p[i + 1]) / (p[j + 1] - p[i + 1]) + p[i]) r = !r;
  return r;
}
function near(p, w, x, y) {
  for (let i = 0; i + 3 < p.length; i += 2) {
    const dx = p[i + 2] - p[i], dy = p[i + 3] - p[i + 1];
    let t = ((x - p[i]) * dx + (y - p[i + 1]) * dy) / (dx * dx + dy * dy);
    t = Math.max(0, Math.min(1, t));
    if (Math.hypot(x - p[i] - t * dx, y - p[i + 1] - t * dy) <= w / 2) return true;
  }
  return false;
}
const img = ctx.createImageData(W, H);
for (let j = 0; j < H; j++) for (let i = 0; i < W; i++) {
  const x = OX + (i + .5) * CELL, y = OY + (j + .5) * CELL;
  const jx = x + (hash(i, j, 7) - .5) * 3, jy = y + (hash(i, j, 8) - .5) * 3;
  let m = FOREST;
  for (let k = shapes.length - 1; k >= 0; k--) {
    const s = shapes[k];
    if (s.w ? near(s.pts, s.w, x, y) : inside(s.pts, jx, jy)) { m = s.m; break; }
  }
  // streaks run parallel to the river bank
  const streak = smooth((i - j * .6) / 7, (j + i * .6) / 2.4, 4);
  const n = smooth(i / 2.1, j / 1.7, 1) * .6 + hash(i, j, 2) * .2 + streak * .35;
  let c;
  if (m.c) {
    const f = 1 + (n - .57) * 2.2 * m.n;
    c = m.c.map(v => v * f);
  } else {
    const t = (n - .575) * 1.95 + .56 + m.b;
    const g = smooth(i / 1.9, j / 1.9, 5) * .8 + smooth(i / 9, j / 9, 6) * .2;
    c = ramp(RED, t);
    if (m.g > .05) {
      const k = Math.max(0, Math.min(1, (m.g + .17 - g) * 7)), gr = ramp(GREY, t + .05);
      c = c.map((v, q) => v + (gr[q] - v) * k);
    }
    const sp = hash(i, j, 9);
    if (sp < m.s) c = sp < m.s * .5 ? [130, 195, 195] : sp < m.s * .75 ? [120, 170, 80] : [185, 160, 150];
  }
  const o = (j * W + i) * 4;
  img.data[o] = c[0]; img.data[o + 1] = c[1]; img.data[o + 2] = c[2]; img.data[o + 3] = 255;
}
ctx.putImageData(img, 0, 0);
```
